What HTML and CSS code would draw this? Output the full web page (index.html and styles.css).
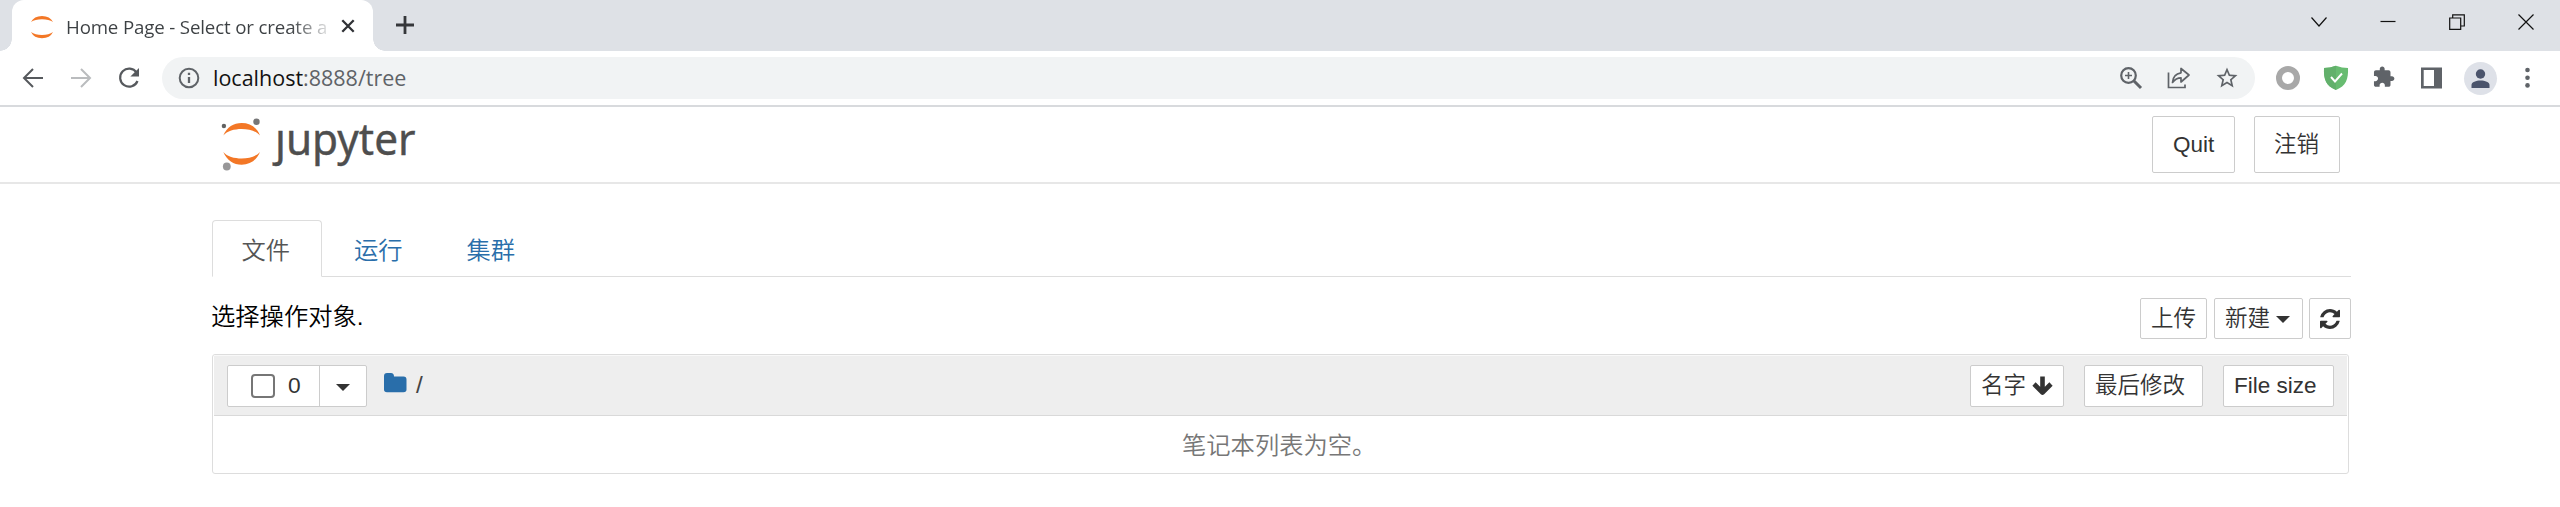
FILE: index.html
```html
<!DOCTYPE html>
<html lang="zh-CN">
<head>
<meta charset="utf-8">
<title>Home Page - Select or create a notebook</title>
<link rel="stylesheet" href="styles.css">
</head>
<body>
<div class="tabstrip">
  <div class="browser-tab">
    <svg class="favicon" width="24" height="24" viewBox="0 0 24 24" fill="#f37726"><path d="M1 7Q4 1 12 1T23 7Q19 4.2 12 4.2T1 7zM1 17Q4 23.2 12 23.2T23 17Q19 20 12 20T1 17z"/></svg>
    <span class="tab-title">Home Page - Select or create a</span>
    <svg class="tab-close" width="14" height="14" viewBox="0 0 14 14" fill="none" stroke="#303236" stroke-width="2.3"><path d="M1.3 1.3l11.4 11.4M12.7 1.3L1.3 12.7"/></svg>
  </div>
  <svg class="new-tab" width="18" height="18" viewBox="0 0 18 18" fill="none" stroke="#35373a" stroke-width="2.8"><path d="M9 0v18M0 9h18"/></svg>
  <div class="window-controls">
    <svg width="16" height="16" viewBox="0 0 16 16"><path d="M.5 3.500L8 12l7.500-8.500"/></svg>
    <svg width="16" height="16" viewBox="0 0 16 16"><path d="M.5 7.500h15"/></svg>
    <svg width="16" height="16" viewBox="0 0 16 16"><path d="M.7 4h11v11.300h-11zM3.700 4V.8h11.600v11.200h-3.500"/></svg>
    <svg width="16" height="16" viewBox="0 0 16 16"><path d="M.5.5l15 15M15.500.5l-15 15"/></svg>
  </div>
</div>
<div class="toolbar">
  <div class="nav">
    <svg width="22" height="22" viewBox="0 0 22 22" fill="none" stroke="#56595d" stroke-width="2"><path d="M21 11H2.500M11 2L2 11l9 9"/></svg>
    <svg width="22" height="22" viewBox="0 0 22 22" fill="none" stroke="#babcbe" stroke-width="2"><path d="M1 11h18.500M11 2l9 9-9 9"/></svg>
    <svg width="22" height="22" viewBox="0 0 22 22" fill="none" stroke="#56595d" stroke-width="2.200"><path d="M18.600 5.600A9 9 0 1 0 19.500 14"/><path d="M21 1v8.600h-8.600z" fill="#56595d" stroke="none"/></svg>
  </div>
  <div class="omnibox">
    <svg width="22" height="22" viewBox="0 0 22 22" fill="none" stroke="#5f6368" stroke-width="2"><circle cx="11" cy="11" r="9.300"/><path d="M11 10v6M11 5.700v2.200" stroke-width="2.300"/></svg>
    <span class="url"><b>localhost</b>:8888/tree</span>
    <div class="omni-icons">
      <svg width="24" height="24" viewBox="0 0 24 24" fill="none" stroke="#5f6368" stroke-width="2.200"><circle cx="9.500" cy="9.500" r="7.300"/><path d="M15 15l7 7" stroke-width="3"/><path d="M9.500 6v7M6 9.500h7" stroke-width="1.600"/></svg>
      <svg width="24" height="24" viewBox="0 0 24 24" fill="none" stroke="#5f6368" stroke-width="1.700"><path d="M1.500 6.500v15H18v-3"/><path d="M14 2.500v4.300Q6 8 5.500 16.500 9 11.800 14 11.800V16l8-7z" stroke-linejoin="round"/></svg>
      <svg width="24" height="24" viewBox="0 0 24 24" fill="#5f6368"><path d="M22 9.240l-7.190-.62L12 2 9.190 8.630 2 9.240l5.460 4.730L5.820 21 12 17.270 18.180 21l-1.630-7.030L22 9.240zM12 15.400l-3.760 2.270 1-4.280-3.320-2.880 4.380-.38L12 6.100l1.710 4.040 4.380.38-3.320 2.880 1 4.280L12 15.400z" transform="translate(-.6 -.6) scale(1.050)"/></svg>
    </div>
  </div>
  <div class="extensions">
    <svg width="26" height="26" viewBox="0 0 26 26" fill="#fff" stroke="#a8a8a8" stroke-width="6"><circle cx="13" cy="13" r="9"/></svg>
    <svg width="26" height="26" viewBox="0 0 26 26"><path d="M1 3Q7 3 13 .7 19 3 25 3C25.500 14 23 21 13 25 3 21 .5 14 1 3z" fill="#68bc71"/><path d="M1 3Q7 3 13 .7V25C3 21 .5 14 1 3z" fill="#62b06b"/><path d="M8 12l4 4.500 7-8" fill="none" stroke="#fff" stroke-width="1.900"/></svg>
    <svg width="26" height="26" viewBox="1 1 23 23" fill="#5f6368"><path d="M20.500 11H19V7c0-1.100-.9-2-2-2h-4V3.500C13 2.120 11.880 1 10.500 1S8 2.120 8 3.500V5H4c-1.100 0-1.990.9-1.990 2v3.800H3.500c1.490 0 2.700 1.210 2.700 2.700s-1.210 2.700-2.700 2.700H2V20c0 1.100.9 2 2 2h3.800v-1.500c0-1.490 1.210-2.700 2.700-2.700 1.490 0 2.700 1.210 2.700 2.700V22H17c1.100 0 2-.9 2-2v-4h1.500c1.380 0 2.500-1.120 2.500-2.500S21.880 11 20.500 11z" transform="translate(1.900 1.400) scale(.86)"/></svg>
    <svg width="26" height="26" viewBox="0 0 26 26"><path fill="#5f6368" fill-rule="evenodd" d="M2 2.500h21v21H2zM4.700 5v16H15V5z"/></svg>
    <svg width="33" height="33" viewBox="0 0 33 33"><circle cx="16.500" cy="16.500" r="16.500" fill="#dee1e8"/><circle cx="16.500" cy="12" r="4.700" fill="#4b546c"/><path d="M7.500 26v-3c0-6 18-6 18 0v3z" fill="#4b546c"/></svg>
    <svg width="26" height="26" viewBox="0 0 26 26" fill="#5f6368"><circle cx="12.500" cy="5" r="2.300"/><circle cx="12.500" cy="12.700" r="2.300"/><circle cx="12.500" cy="20.400" r="2.300"/></svg>
  </div>
</div>
<header class="site-header">
  <svg class="logo" width="200" height="66" viewBox="0 0 200 66">
    <path fill="#f37726" d="M1.300 19.500C5 11 11.500 7 19.700 7S34.500 11 38 19.500C34 15 27 13 19.700 13S5 15 1.300 19.500zM1.300 36C5 44.500 11.500 48.700 19.700 48.700S34.500 44.500 38 36C34 40.500 27 42.500 19.700 42.500S5 40.500 1.300 36z"/>
    <circle cx="1.900" cy="10" r="2.200" fill="#616262"/><circle cx="34.500" cy="5.700" r="3.200" fill="#767677"/><circle cx="4.800" cy="50.500" r="3.900" fill="#989798"/>
    <text class="wordmark" x="53" y="38.500" textLength="140.500" lengthAdjust="spacingAndGlyphs">ȷupyter</text>
  </svg>
  <div class="header-buttons">
    <button class="btn btn-quit">Quit</button>
    <button class="btn btn-logout">注销</button>
  </div>
</header>
<main class="container">
  <nav class="tabs"><a class="tab active">文件</a><a class="tab">运行</a><a class="tab">集群</a></nav>
  <div class="actions">
    <span class="hint">选择操作对象.</span>
    <div class="action-buttons">
      <button class="btn upload">上传</button>
      <button class="btn new">新建<i class="caret"></i></button>
      <button class="btn refresh"><svg width="20" height="20" viewBox="0 0 1536 1536" fill="#333"><path d="M1511 928q0 5-1 7-64 268-268 434.500T764 1536q-146 0-282.500-55T238 1324l-129 129q-19 19-45 19t-45-19-19-45V960q0-26 19-45t45-19h448q26 0 45 19t19 45-19 45l-137 137q71 66 161 102t187 36q134 0 250-65t186-179q11-17 53-117 8-23 30-23h192q13 0 22.500 9.500t9.500 22.500zm25-800v448q0 26-19 45t-45 19h-448q-26 0-45-19t-19-45 19-45l138-138Q969 256 768 256q-134 0-250 65T332 500q-11 17-53 117-8 23-30 23H50q-13 0-22.500-9.500T18 608v-7q65-268 270-434.500T768 0q146 0 284 55.500T1297 212l130-129q19-19 45-19t45 19 19 45z"/></svg></button>
    </div>
  </div>
  <section class="list">
    <div class="list-header">
      <div class="select-group">
        <div class="select-all"><i class="checkbox"></i><span>0</span></div>
        <div class="select-menu"><i class="caret"></i></div>
      </div>
      <svg class="folder" width="23" height="20" viewBox="0 0 23 20" fill="#296eaa"><path d="M0 3Q0 0 3 0H7Q10 0 10 3.500H19.500Q22.500 3.500 22.500 6.500V16.500Q22.500 19.300 19.500 19.300H3Q0 19.300 0 16.500z"/></svg>
      <span class="crumb">/</span>
      <div class="sorts">
        <button class="btn sort-name">名字<svg width="21" height="20" viewBox="0 0 21 20" fill="none" stroke="#333" stroke-width="4.600" stroke-linejoin="round"><path d="M10.500 .5v16M2 8l8.500 8.500L19 8"/></svg></button>
        <button class="btn sort-modified">最后修改</button>
        <button class="btn sort-size">File size</button>
      </div>
    </div>
    <div class="empty">笔记本列表为空。</div>
  </section>
</main>
</body>
</html>
```
FILE: styles.css
```css
* { box-sizing: border-box; }
body {
  margin: 0;
  height: 507px;
  overflow: hidden;
  background: #fff;
  color: #000;
  font: 24.300px "Liberation Sans", "Noto Sans CJK SC", sans-serif;
}
svg { display: block; flex: none; overflow: visible; }

/* Browser window */
.tabstrip { display: flex; height: 51px; background: #dee1e6; }
.browser-tab {
  position: relative;
  display: flex;
  align-items: center;
  width: 361px;
  height: 51px;
  margin-left: 12px;
  padding: 2px 18px 0 18px;
  border-radius: 12px 12px 0 0;
  background: #fff;
}
.browser-tab::before, .browser-tab::after {
  content: "";
  position: absolute;
  bottom: 0;
  width: 12px;
  height: 12px;
}
.browser-tab::before { left: -12px; background: radial-gradient(circle at 0 0, transparent 11.500px, #fff 12px); }
.browser-tab::after { right: -12px; background: radial-gradient(circle at 100% 0, transparent 11.500px, #fff 12px); }
.tab-title {
  width: 264px;
  margin-left: 12px;
  white-space: nowrap;
  font: 18.700px/30px "Open Sans", "Noto Sans", sans-serif;
  letter-spacing: -.15px;
  background: linear-gradient(90deg, #3c4043 225px, rgba(60, 64, 67, .1) 264px);
  -webkit-background-clip: text;
  background-clip: text;
  color: transparent;
}
.tab-close { margin-left: 11px; margin-top: -2px; }
.new-tab { margin: 16px 0 0 23px; }
.window-controls { display: flex; gap: 53px; margin: 14px 26px 0 auto; }
.window-controls svg { fill: none; stroke: #111; stroke-width: 1.200; }
.toolbar { display: flex; align-items: center; height: 56px; border-bottom: 2px solid #d8dadd; }
.nav { display: flex; gap: 26px; padding-left: 22px; width: 162px; }
.omnibox {
  display: flex;
  align-items: center;
  flex: 1;
  height: 42px;
  padding: 0 16px;
  border-radius: 21px;
  background: #f1f3f4;
}
.url {
  margin-left: 13px;
  color: #5f6368;
  font: 21.500px/32px "Open Sans", "Noto Sans", sans-serif;
}
.url b { font-weight: 400; color: #111; }
.omni-icons { display: flex; gap: 24px; margin-left: auto; }
.extensions { display: flex; align-items: center; width: 305px; padding-left: 20px; gap: 22px; }
.extensions svg:nth-child(5) { margin: 0 -3.500px; }

/* Notebook header */
.site-header { display: flex; height: 77px; border-bottom: 2px solid #e7e7e7; }
.logo { margin: 9px 0 0 222px; }
.wordmark { font: 43px "Noto Sans", sans-serif; fill: #4e4e4e; stroke: #4e4e4e; stroke-width: .4px; }
.header-buttons { display: flex; gap: 19px; margin: 9px 220px 0 auto; }
.btn {
  display: flex;
  align-items: center;
  height: 42px;
  margin: 0;
  padding: 0 0 0 10px;
  border: 1px solid #ccc;
  border-radius: 2px;
  background: #fff;
  color: #333;
  font: 22.500px/30px "Liberation Sans", "Noto Sans CJK SC", sans-serif;
  font-weight: 350;
  white-space: nowrap;
}
.header-buttons .btn { height: 57px; padding-left: 20px; }
.header-buttons .btn-logout { padding-left: 19px; }
.btn-quit { width: 83px; }
.btn-logout { width: 86px; }

/* File browser */
.container { width: 2139px; margin: 36px 0 0 212px; font-weight: 350; }
.tabs { display: flex; gap: 3px; height: 57px; border-bottom: 1px solid #ddd; }
.tab {
  width: 109.500px;
  height: 57px;
  padding-left: 28.500px;
  border: 1px solid transparent;
  line-height: 59px;
  color: #296eaa;
}
.tab.active { border-color: #ddd; border-bottom-color: #fff; border-radius: 4px 4px 0 0; background: #fff; color: #555; }
.actions { display: flex; justify-content: space-between; height: 77px; padding-top: 21px; }
.hint { line-height: 37px; margin-left: -1px; }
.action-buttons { display: flex; }
.action-buttons .btn { height: 41px; }
.upload { width: 67px; }
.new { width: 89px; margin-left: 7px; }
.refresh { width: 42px; margin-left: 6px; }
.caret { width: 0; border: 7px solid transparent; border-top-color: #333; border-bottom: 0; }
.new .caret { margin-left: 6px; margin-top: 2px; }
.list { width: 2137px; height: 120px; border: 1px solid #ddd; border-radius: 3px; }
.list-header {
  display: flex;
  height: 61px;
  margin: 0 1px;
  padding-top: 10px;
  padding-left: 13px;
  border-top: 1px solid #f8f8f8;
  border-bottom: 1px solid #d9d9d9;
  background: #eee;
}
.select-group { display: flex; width: 140px; height: 42px; margin-top: -1px; border: 1px solid #ccc; border-radius: 2px; background: #fff; color: #333; }
.select-all { display: flex; align-items: center; width: 92px; padding-left: 23px; font-size: 22.750px; border-right: 1px solid #ccc; }
.select-all span { margin-top: -2px; }
.checkbox { width: 24px; height: 24px; margin-right: 13px; border: 2px solid #767676; border-radius: 4px; }
.select-menu { flex: 1; display: flex; align-items: center; justify-content: center; padding-top: 3px; }
.folder { margin: 7px 0 0 17px; }
.crumb { margin: 3px 0 0 9px; line-height: 31px; color: #444; }
.sorts { display: flex; margin: -1px 13px 0 auto; }
.sort-name { width: 94px; }
.sort-name svg { margin-left: 6px; }
.sort-modified { width: 119px; margin-left: 20px; }
.sort-size { width: 111px; margin-left: 20px; }
.empty { height: 57px; line-height: 59px; padding-left: 969px; color: #777; }
```
